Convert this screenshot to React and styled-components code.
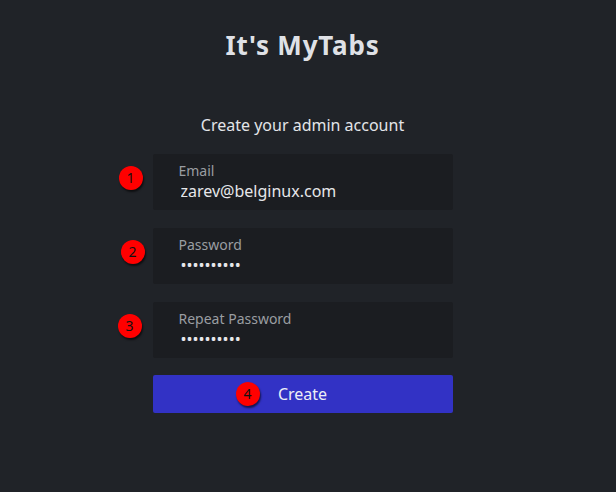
import React from 'react'
import styled, { createGlobalStyle } from 'styled-components'

const GlobalStyle = createGlobalStyle`
  html, body {
    margin: 0;
    padding: 0;
    background: #202328;
  }
  body {
    font-family: "Noto Sans", "Open Sans", sans-serif;
    color: #e3e5e8;
  }
`

const fields = [
  { label: 'Email', type: 'text', value: 'zarev@belginux.com', badge: 1, bx: -34 },
  { label: 'Password', type: 'password', value: 'aaaaaaaaaa', badge: 2, bx: -32 },
  { label: 'Repeat Password', type: 'password', value: 'aaaaaaaaaa', badge: 3, bx: -35 },
]

export default function App() {
  return (
    <Page>
      <GlobalStyle />
      <Title>It's MyTabs</Title>
      <Subtitle>Create your admin account</Subtitle>
      <Form>
        {fields.map((f) => (
          <Field key={f.label}>
            <Badge style={{ left: f.bx }}>{f.badge}</Badge>
            <Label>{f.label}</Label>
            <Input type={f.type} defaultValue={f.value} readOnly />
          </Field>
        ))}
        <Button>
          <ButtonBadge>4</ButtonBadge>
          Create
        </Button>
      </Form>
    </Page>
  )
}

const Page = styled.div`
  width: 605px;
  height: 492px;
  display: flex;
  flex-direction: column;
  align-items: center;
  box-sizing: border-box;
  padding-top: 26px;
`

const Title = styled.h1`
  margin: 0;
  font-size: 26px;
  font-weight: 700;
  letter-spacing: 0.8px;
  line-height: 38px;
  color: #dfe1e6;
`

const Subtitle = styled.p`
  margin: 49px 0 0;
  font-size: 16px;
  line-height: 24px;
  color: #e3e5e8;
`

const Form = styled.div`
  margin-top: 17px;
  width: 300px;
  display: flex;
  flex-direction: column;
  gap: 18px;
`

const Field = styled.div`
  position: relative;
  height: 56px;
  box-sizing: border-box;
  padding: 8px 0 0 26px;
  background: #1b1d21;
  border-radius: 2px;
  display: flex;
  flex-direction: column;
`

const Label = styled.span`
  font-size: 14px;
  line-height: 18px;
  color: #9a9da2;
`

const Input = styled.input`
  margin: 0;
  padding: 0 0 0 2px;
  border: none;
  outline: none;
  background: transparent;
  font-family: inherit;
  font-size: 16px;
  line-height: 22px;
  height: 22px;
  color: #e6e7ea;
  width: 260px;
`

const Badge = styled.span`
  position: absolute;
  top: 12px;
  width: 24px;
  height: 24px;
  border-radius: 50%;
  background: #ff0000;
  color: #111;
  font-size: 14px;
  line-height: 24px;
  text-align: center;
  box-shadow: 1px 2px 2px rgba(0, 0, 0, 0.6);
`

const Button = styled.button`
  position: relative;
  margin-top: -1px;
  height: 38px;
  border: none;
  border-radius: 2px;
  background: #3232c5;
  color: #eceef6;
  font-family: inherit;
  font-size: 16px;
  padding: 0;
`

const ButtonBadge = styled(Badge)`
  top: 7px;
  left: 83px;
`
